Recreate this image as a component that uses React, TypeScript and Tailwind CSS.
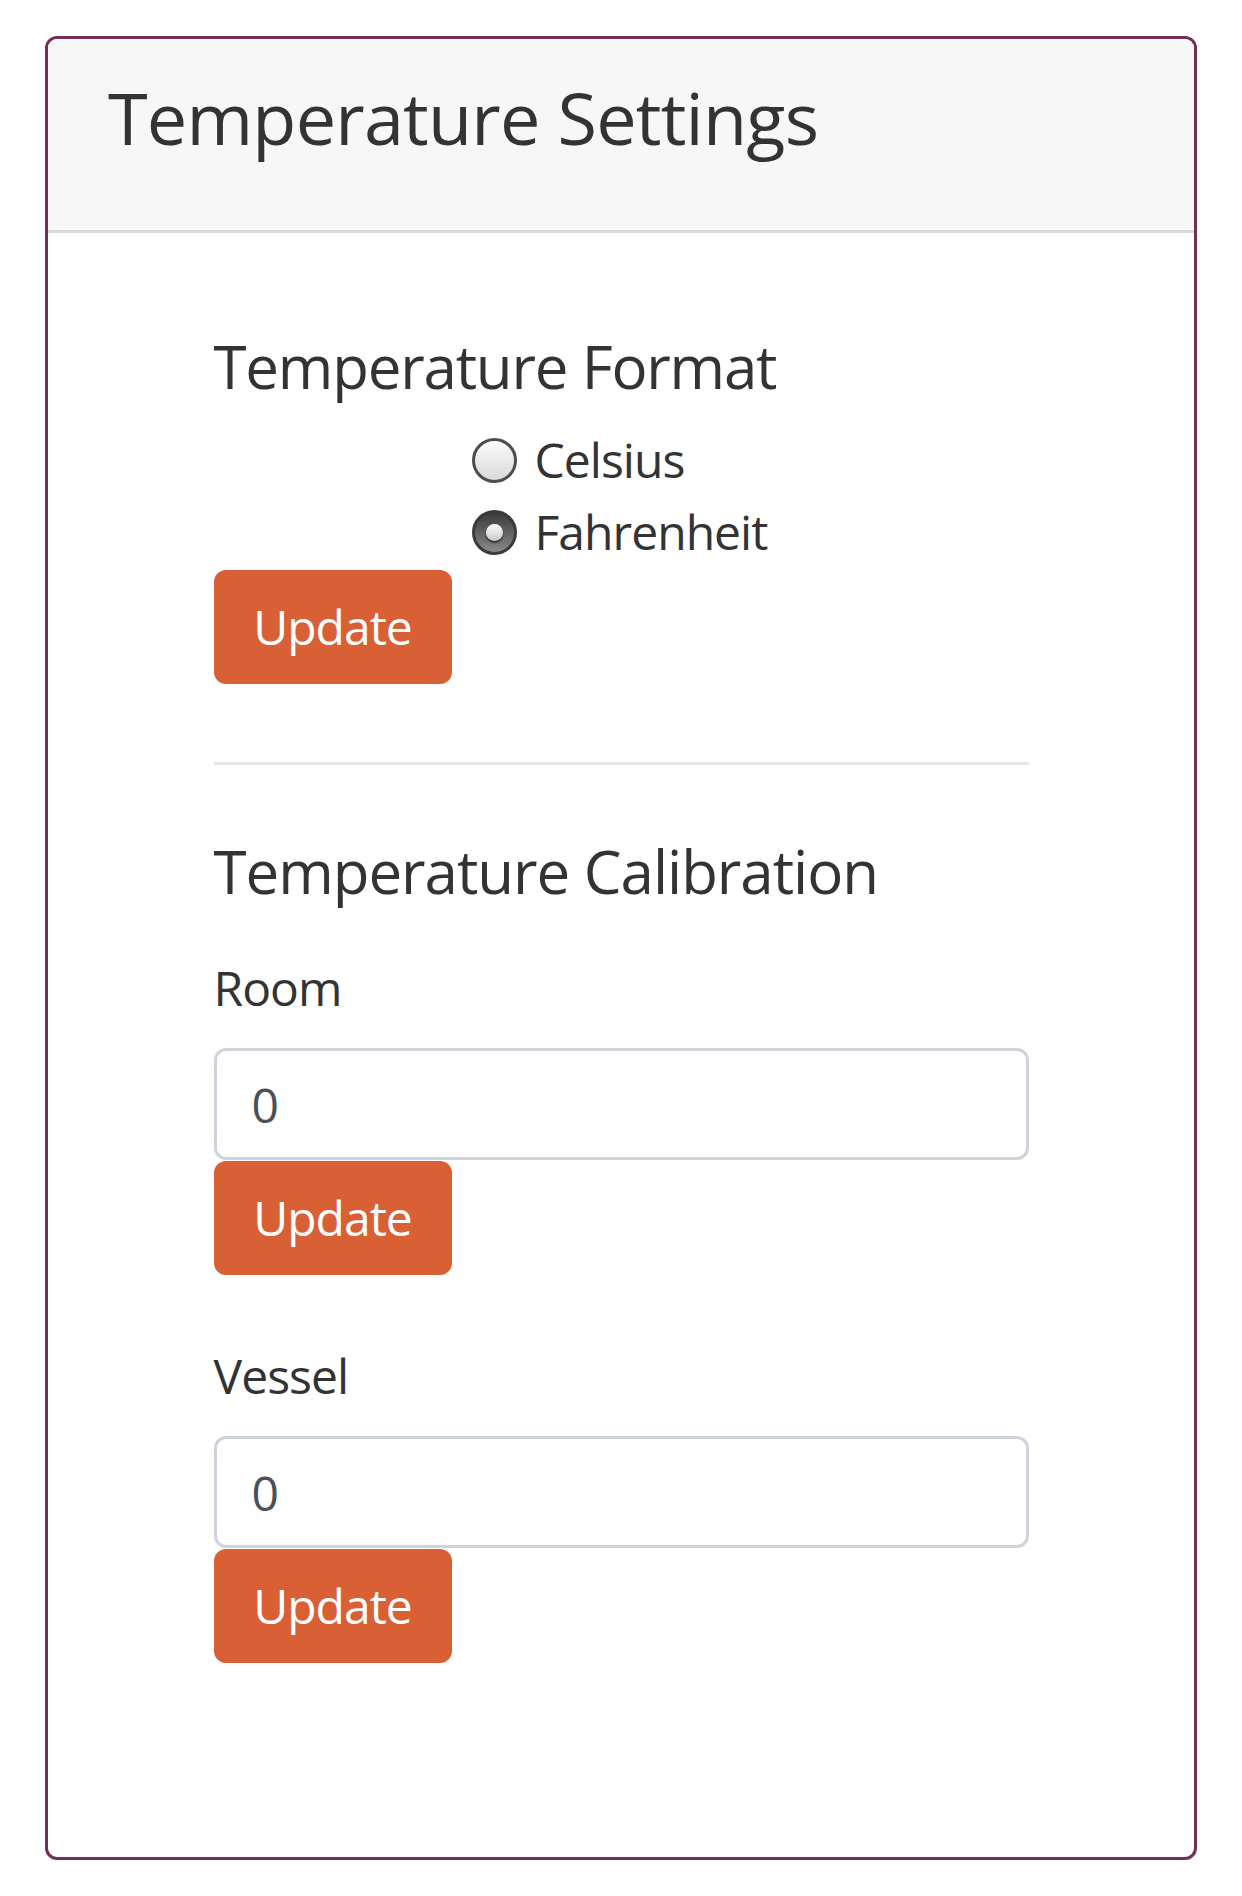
import { useState } from 'react';

type Unit = 'celsius' | 'fahrenheit';

const font = { fontFamily: '"Open Sans", "Noto Sans", sans-serif' };

const UpdateButton = () => (
    <button
        type="button"
        className="h-[114px] w-[238px] rounded-[12px] bg-[#d95f35] text-[48px] leading-[72px] text-white tracking-[-0.02em]"
    >
        Update
    </button>
);

const Radio = ({ checked, label, onClick }: { checked: boolean; label: string; onClick: () => void }) => (
    <label className="flex h-[72px] items-center cursor-pointer" onClick={onClick}>
        {checked ? (
            <span className="flex h-[45px] w-[45px] items-center justify-center rounded-full border-[3px] border-[#3a3a3a] bg-linear-to-b from-[#3c3c3c] to-[#8a8a8a]">
                <span className="h-[17px] w-[17px] rounded-full bg-linear-to-b from-[#ffffff] to-[#c8c8c8] shadow-[0_2px_2px_rgba(0,0,0,0.6)]" />
            </span>
        ) : (
            <span className="h-[45px] w-[45px] rounded-full border-[3px] border-[#4d4d4d] bg-linear-to-b from-[#fbfbfb] to-[#d9d9d9]" />
        )}
        <span className="ml-[18px] text-[48px] leading-[72px] text-[#333333] tracking-[-0.02em]">{label}</span>
    </label>
);

const CalibrationField = ({ label }: { label: string }) => (
    <div>
        <div className="text-[48px] leading-[72px] text-[#333333] tracking-[-0.02em]">{label}</div>
        <input
            type="text"
            defaultValue="0"
            className="mt-[24px] block h-[112px] w-full rounded-[12px] border-[3px] border-[#ced4da] bg-white px-[35px] text-[48px] text-[#495057] outline-none"
        />
        <div className="mt-px">
            <UpdateButton />
        </div>
    </div>
);

export default function App() {
    const [unit, setUnit] = useState<Unit>('fahrenheit');

    return (
        <div className="min-h-[1896px] bg-white px-[45px] pt-[36px]" style={font}>
            <div className="h-[1824px] overflow-hidden rounded-[12px] border-[3px] border-[#722f57]">
                {/* header */}
                <div className="h-[194px] border-b-[3px] border-[#d9d9d9] bg-[#f7f7f7] px-[60px] pt-[35px]">
                    <h1 className="text-[72px] leading-[86px] text-[#333333] tracking-[-0.011em]">Temperature Settings</h1>
                </div>

                {/* body */}
                <div className="mx-auto w-[815px] pt-[97px]">
                    <h2 className="text-[60px] leading-[72px] text-[#333333] tracking-[-0.02em]">Temperature Format</h2>
                    <div className="mt-[22px] ml-[258px] flex flex-col">
                        <Radio checked={unit === 'celsius'} label="Celsius" onClick={() => setUnit('celsius')} />
                        <Radio checked={unit === 'fahrenheit'} label="Fahrenheit" onClick={() => setUnit('fahrenheit')} />
                    </div>
                    <div className="mt-[2px]">
                        <UpdateButton />
                    </div>

                    <hr className="mt-[78px] border-t-[3px] border-[#e6e6e6]" />

                    <h2 className="mt-[70px] text-[60px] leading-[72px] text-[#333333] tracking-[-0.017em]">Temperature Calibration</h2>
                    <div className="mt-[45px]">
                        <CalibrationField label="Room" />
                    </div>
                    <div className="mt-[65px]">
                        <CalibrationField label="Vessel" />
                    </div>
                </div>
            </div>
        </div>
    );
}
